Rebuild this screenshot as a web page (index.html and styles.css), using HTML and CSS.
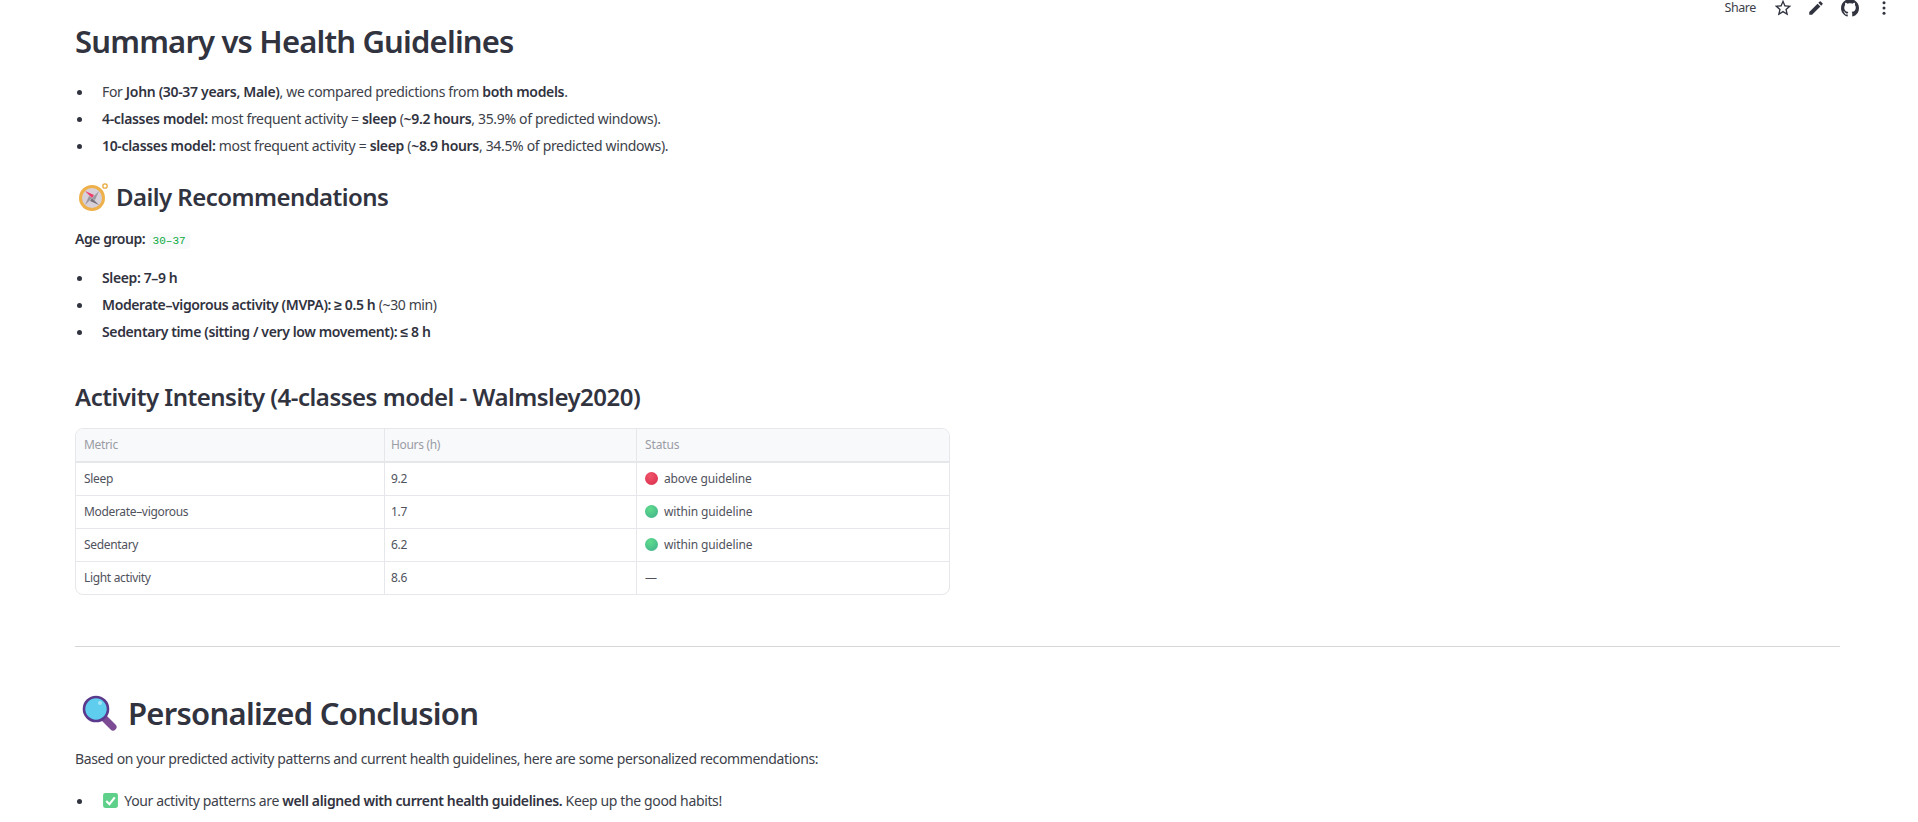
FILE: index.html
```html
<!DOCTYPE html>
<html lang="en">
<head>
<meta charset="utf-8">
<title>Summary vs Health Guidelines</title>
<link rel="stylesheet" href="styles.css">
</head>
<body>
<header class="toolbar">
  <span class="share">Share</span>
  <svg class="tool star" viewBox="0 0 24 24"><path d="M22 9.24l-7.19-.62L12 2 9.19 8.63 2 9.24l5.46 4.73L5.82 21 12 17.27 18.18 21l-1.63-7.03L22 9.24zM12 15.4l-3.76 2.27 1-4.28-3.32-2.88 4.38-.38L12 6.1l1.71 4.04 4.38.38-3.32 2.88 1 4.28L12 15.4z"/></svg>
  <svg class="tool" viewBox="0 0 24 24"><path d="M3 17.25V21h3.75L17.81 9.94l-3.75-3.75L3 17.25zM20.71 7.04a1 1 0 000-1.41l-2.34-2.34a1 1 0 00-1.41 0l-1.83 1.83 3.75 3.75 1.83-1.83z"/></svg>
  <svg class="tool" viewBox="0 0 16 16"><path d="M8 0C3.58 0 0 3.58 0 8c0 3.54 2.29 6.53 5.47 7.59.4.07.55-.17.55-.38 0-.19-.01-.82-.01-1.49-2.01.37-2.53-.49-2.69-.94-.09-.23-.48-.94-.82-1.13-.28-.15-.68-.52-.01-.53.63-.01 1.08.58 1.23.82.72 1.21 1.87.87 2.33.66.07-.52.28-.87.51-1.07-1.78-.2-3.64-.89-3.64-3.95 0-.87.31-1.59.82-2.15-.08-.2-.36-1.02.08-2.12 0 0 .67-.21 2.2.82.64-.18 1.32-.27 2-.27.68 0 1.36.09 2 .27 1.53-1.04 2.2-.82 2.2-.82.44 1.1.16 1.92.08 2.12.51.56.82 1.27.82 2.15 0 3.07-1.87 3.75-3.65 3.95.29.25.54.73.54 1.48 0 1.07-.01 1.93-.01 2.2 0 .21.15.46.55.38A8.013 8.013 0 0016 8c0-4.42-3.58-8-8-8z"/></svg>
  <svg class="tool" viewBox="0 0 24 24"><circle cx="12" cy="5" r="2"/><circle cx="12" cy="12" r="2"/><circle cx="12" cy="19" r="2"/></svg>
</header>
<main class="content">
  <h2 class="title">Summary vs Health Guidelines</h2>
  <ul class="list">
    <li>For <b>John (30-37 years, Male)</b>, we compared predictions from <b>both models</b>.</li>
    <li><b>4-classes model:</b> most frequent activity = <b>sleep</b> (<b>~9.2 hours</b>, 35.9% of predicted windows).</li>
    <li><b>10-classes model:</b> most frequent activity = <b>sleep</b> (<b>~8.9 hours</b>, 34.5% of predicted windows).</li>
  </ul>
  <h3 class="sub daily">
    <svg class="emoji-compass" viewBox="0 0 32 32">
      <circle cx="28" cy="5" r="2.2" fill="none" stroke="#e8a93c" stroke-width="1.3"/>
      <circle cx="15" cy="17" r="13" fill="#eeb04a"/>
      <circle cx="15" cy="17" r="10" fill="#d8d0d8"/>
      <path d="M15 17L8 10l9 4z" fill="#f0386b"/>
      <path d="M15 17l7 7-9-4z" fill="#77727c"/>
      <path d="M15 17l7-7-4 9zM15 17l-7 7 4-9z" fill="#9b96a0"/>
    </svg>
    <span>Daily Recommendations</span>
  </h3>
  <p class="age"><b class="age-label">Age group:</b> <code class="pill">30–37</code></p>
  <ul class="list guide">
    <li><b>Sleep: 7–9 h</b></li>
    <li><b>Moderate–vigorous activity (MVPA): ≥ 0.5 h</b> (~30 min)</li>
    <li><b>Sedentary time (sitting / very low movement): ≤ 8 h</b></li>
  </ul>
  <h3 class="sub activity">Activity Intensity (4-classes model - Walmsley2020)</h3>
  <div class="table-wrap">
    <table class="data">
      <thead>
        <tr><th class="c1">Metric</th><th class="c2">Hours (h)</th><th class="c3">Status</th></tr>
      </thead>
      <tbody>
        <tr><td>Sleep</td><td class="c2">9.2</td><td class="c3"><span class="dot red"></span>above guideline</td></tr>
        <tr><td>Moderate–vigorous</td><td class="c2">1.7</td><td class="c3"><span class="dot green"></span>within guideline</td></tr>
        <tr><td>Sedentary</td><td class="c2">6.2</td><td class="c3"><span class="dot green"></span>within guideline</td></tr>
        <tr><td>Light activity</td><td class="c2">8.6</td><td class="c3">—</td></tr>
      </tbody>
    </table>
  </div>
  <hr class="rule">
  <h2 class="title conclusion">
    <svg class="emoji-lens" viewBox="0 0 36 36">
      <path d="M22 23l9 9" stroke="#7d4a94" stroke-width="7" stroke-linecap="round"/>
      <circle cx="14" cy="14" r="12" fill="#5fcdee" stroke="#5b3a8e" stroke-width="2.6"/>
      <circle cx="18" cy="8" r="2" fill="#a6e4f6"/>
    </svg>
    <span>Personalized Conclusion</span>
  </h2>
  <p class="intro">Based on your predicted activity patterns and current health guidelines, here are some personalized recommendations:</p>
  <ul class="list last">
    <li><svg class="emoji-check" viewBox="0 0 16 16"><rect x="1" y="1" width="14" height="14" rx="2" fill="#5fd08a"/><path d="M4 8.5l3 3 5-6.5" fill="none" stroke="#fff" stroke-width="2"/></svg> Your activity patterns are <b>well aligned with current health guidelines.</b> Keep up the good habits!</li>
  </ul>
</main>
</body>
</html>
```
FILE: styles.css
```css
html, body {
  margin: 0;
  padding: 0;
  background: #fff;
  overflow: hidden;
}
body {
  height: 822px;
  font-family: "Noto Sans", "Liberation Sans", sans-serif;
  font-size: 14px;
  line-height: 22px;
  color: #3d3f4a;
  letter-spacing: -0.33px;
}
b {
  font-weight: 600;
  color: #31333f;
}
.toolbar {
  display: flex;
  align-items: center;
  justify-content: flex-end;
  height: 15px;
  padding-right: 25px;
  gap: 16px;
}
.share {
  font-size: 12.5px;
  line-height: 15px;
  letter-spacing: -0.4px;
  margin-right: 1px;
}
.tool {
  width: 18px;
  height: 18px;
  fill: #31333f;
  flex: none;
}
.star {
  width: 20px;
  height: 20px;
  margin-right: -2px;
}
.content {
  padding: 0 78px 0 75px;
}
.title {
  margin: 6px 0 0;
  font-size: 31px;
  line-height: 40px;
  font-weight: 600;
  letter-spacing: -0.82px;
  color: #31333f;
}
.list {
  margin: 0;
  padding: 0 0 0 27px;
  list-style: none;
}
.list li {
  margin: 0 0 5px;
}
.list li::before {
  content: "";
  display: inline-block;
  width: 5px;
  height: 5px;
  margin-left: -25px;
  margin-right: 20px;
  vertical-align: 2px;
  border-radius: 50%;
  background: #31333f;
}
.title + .list {
  margin-top: 20px;
}
.sub {
  margin: 0;
  font-weight: 600;
  font-size: 24px;
  line-height: 32px;
  letter-spacing: -0.55px;
  color: #31333f;
}
.daily {
  display: flex;
  align-items: center;
  gap: 7px;
  margin-top: 24px;
}
.emoji-compass {
  width: 32px;
  height: 32px;
  margin-left: 2px;
}
.age {
  margin: 15px 0 0;
}
.age-label {
  letter-spacing: -0.45px;
}
.pill {
  font-family: "Liberation Mono", monospace;
  font-size: 11px;
  color: #09ab3b;
  background: #f8f9fb;
  border-radius: 4px;
  padding: 2px 4px;
  letter-spacing: 0;
}
.guide {
  margin-top: 15px;
  letter-spacing: -0.38px;
}
.activity {
  margin-top: 38px;
  letter-spacing: -0.5px;
}
.table-wrap {
  width: 873px;
  margin-top: 15px;
  border: 1px solid #e6e7ea;
  border-radius: 8px;
  overflow: hidden;
}
.data {
  width: 100%;
  border-collapse: collapse;
  table-layout: fixed;
  font-size: 12px;
  line-height: 16px;
}
.data th, .data td {
  height: 32px;
  padding: 0 8px;
  text-align: left;
  font-weight: 400;
  color: #50525c;
  border-bottom: 1px solid #e6e7ea;
  border-right: 1px solid #e6e7ea;
}
.data tr > :last-child {
  border-right: 0;
}
.data tbody tr:last-child td {
  border-bottom: 0;
}
.data th {
  background: #f8f9fb;
  color: #9a9ca4;
  border-bottom-width: 2px;
}
.data .c2 {
  padding-left: 6px;
  width: 237px;
}
.data .c3 {
  padding-left: 8px;
  letter-spacing: -0.12px;
}
.c1 {
  width: 292px;
}
.dot {
  display: inline-block;
  width: 13px;
  height: 13px;
  border-radius: 50%;
  vertical-align: -2px;
  margin-right: 6px;
}
.red {
  background: radial-gradient(circle at 40% 30%, #f0546a, #d92c4c);
}
.green {
  background: radial-gradient(circle at 40% 30%, #5fdc8c, #3fae8c);
}
.rule {
  margin: 51px 0 0;
  border: 0;
  border-top: 1px solid #d6d6d9;
}
.conclusion {
  display: flex;
  align-items: center;
  gap: 10px;
  margin-top: 46px;
  letter-spacing: -0.72px;
}
.emoji-lens {
  width: 36px;
  height: 36px;
  margin-left: 7px;
}
.intro {
  margin: 15px 0 0;
  letter-spacing: -0.36px;
}
.last {
  margin-top: 20px;
  letter-spacing: -0.36px;
}
.emoji-check {
  width: 17px;
  height: 17px;
  vertical-align: -3px;
  margin-right: 2px;
}
```
